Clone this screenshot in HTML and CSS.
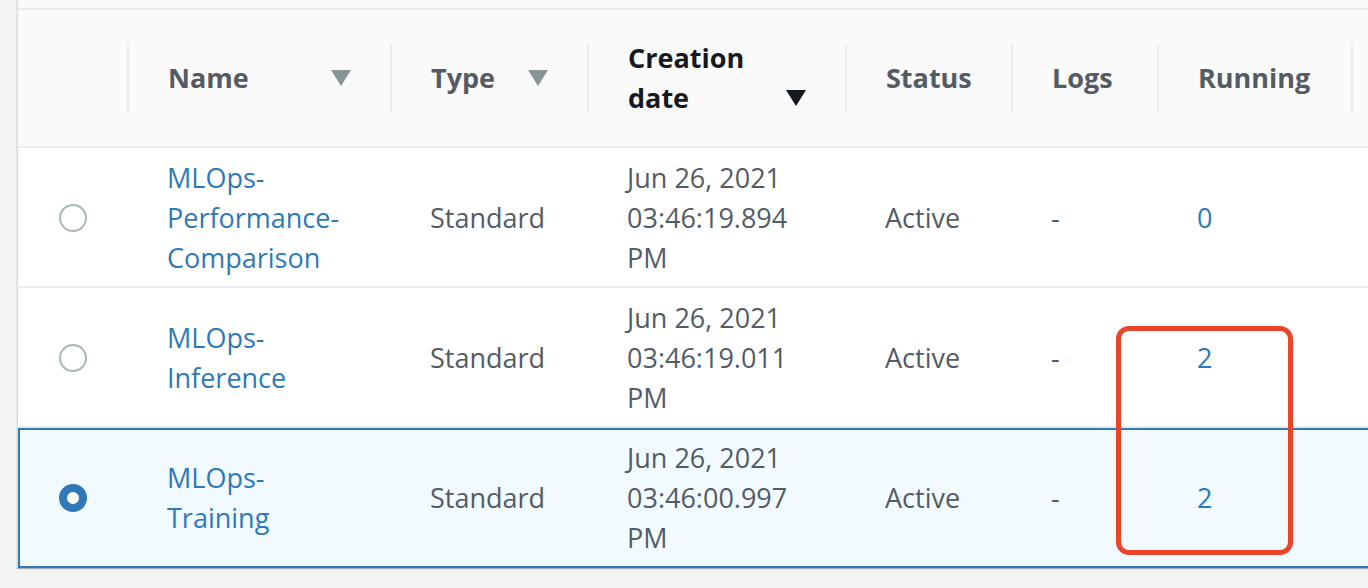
FILE: index.html
```html
<!DOCTYPE html>
<html>
<head>
<meta charset="utf-8">
<link rel="stylesheet" href="styles.css">
</head>
<body>
<div class="page">
  <div class="panel">
    <div class="grid head">
      <div class="hcell"></div>
      <div class="hcell sep"><span>Name</span><span class="arrow"></span></div>
      <div class="hcell sep"><span>Type</span><span class="arrow"></span></div>
      <div class="hcell sep sorted"><span class="wrap">Creation date</span><span class="arrow dark"></span></div>
      <div class="hcell sep"><span>Status</span></div>
      <div class="hcell sep"><span>Logs</span></div>
      <div class="hcell sep"><span>Running</span></div>
      <div class="hcell sep"></div>
    </div>

    <div class="grid row">
      <div class="cell radio-cell"><span class="radio"></span></div>
      <div class="cell name"><a class="link" href="#">MLOps-Performance-Comparison</a></div>
      <div class="cell">Standard</div>
      <div class="cell date">Jun 26, 2021 03:46:19.894 PM</div>
      <div class="cell">Active</div>
      <div class="cell">-</div>
      <div class="cell"><a class="link" href="#">0</a></div>
      <div class="cell"></div>
    </div>

    <div class="grid row">
      <div class="cell radio-cell"><span class="radio"></span></div>
      <div class="cell name"><a class="link" href="#">MLOps-Inference</a></div>
      <div class="cell">Standard</div>
      <div class="cell date">Jun 26, 2021 03:46:19.011 PM</div>
      <div class="cell">Active</div>
      <div class="cell">-</div>
      <div class="cell"><a class="link" href="#">2</a></div>
      <div class="cell"></div>
    </div>

    <div class="grid row selected">
      <div class="cell radio-cell"><span class="radio checked"></span></div>
      <div class="cell name"><a class="link" href="#">MLOps-Training</a></div>
      <div class="cell">Standard</div>
      <div class="cell date">Jun 26, 2021 03:46:00.997 PM</div>
      <div class="cell">Active</div>
      <div class="cell">-</div>
      <div class="cell"><a class="link" href="#">2</a></div>
      <div class="cell"></div>
    </div>
  </div>
  <div class="highlight"></div>
</div>
</body>
</html>
```

FILE: styles.css
```css
html, body {
  margin: 0;
  padding: 0;
  overflow: hidden;
  background: #f2f3f3;
}

body {
  font-family: "Open Sans", "Liberation Sans", sans-serif;
  font-size: 27px;
  line-height: 40px;
  color: #545b64;
}

.page {
  position: relative;
  width: 1368px;
  height: 588px;
  overflow: hidden;
}

.panel {
  margin-left: 17px;
  width: 1420px;
  border-left: 1px solid #d9dcdc;
  padding-top: 8px;
  background: #fafafa;
  box-shadow: 0 1px 1px rgba(0, 28, 36, 0.3);
}

.grid {
  display: grid;
  grid-template-columns: 109px 263px 197px 258px 166px 146px 194px 1fr;
}

.head {
  border-top: 2px solid #eaeded;
  border-bottom: 2px solid #eaeded;
  height: 136px;
  background: #fafafa;
  font-weight: 700;
}

.hcell {
  position: relative;
  display: flex;
  align-items: center;
  justify-content: space-between;
  padding: 0 39px 0 41px;
}

.hcell.sep::before {
  content: "";
  position: absolute;
  left: 0;
  top: 34px;
  bottom: 34px;
  width: 2px;
  background: #eaeded;
}

.sorted {
  color: #16191f;
}

.sorted .wrap {
  max-width: 150px;
}

.arrow {
  width: 0;
  height: 0;
  border-left: 10px solid transparent;
  border-right: 10px solid transparent;
  border-top: 16px solid #879596;
  flex-shrink: 0;
}

.arrow.dark {
  border-top-color: #16191f;
  align-self: flex-end;
  margin-bottom: 40px;
}

.row {
  background: #fff;
  border-bottom: 2px solid #eaeded;
}

.row.selected {
  background: #f1faff;
  border-bottom: none;
  box-shadow: inset 0 0 0 2px #2f79b9;
}

.cell {
  display: flex;
  align-items: center;
  padding: 10px 20px 8px 40px;
}

.row.selected .cell {
  padding-top: 10px;
  padding-bottom: 10px;
}

.name {
  padding-right: 40px;
}

.radio-cell {
  justify-content: center;
  padding-left: 0;
  padding-right: 0;
}

.radio {
  box-sizing: border-box;
  width: 28px;
  height: 28px;
  border-radius: 50%;
  border: 2px solid #aab7b8;
  background: #fff;
}

.radio.checked {
  border: 8.5px solid #2f79b9;
}

.link {
  color: #2e79b9;
  text-decoration: none;
}

.highlight {
  position: absolute;
  left: 1116px;
  top: 326px;
  width: 177px;
  height: 229px;
  box-sizing: border-box;
  border: 5px solid #ea4429;
  border-radius: 13px;
}
```
